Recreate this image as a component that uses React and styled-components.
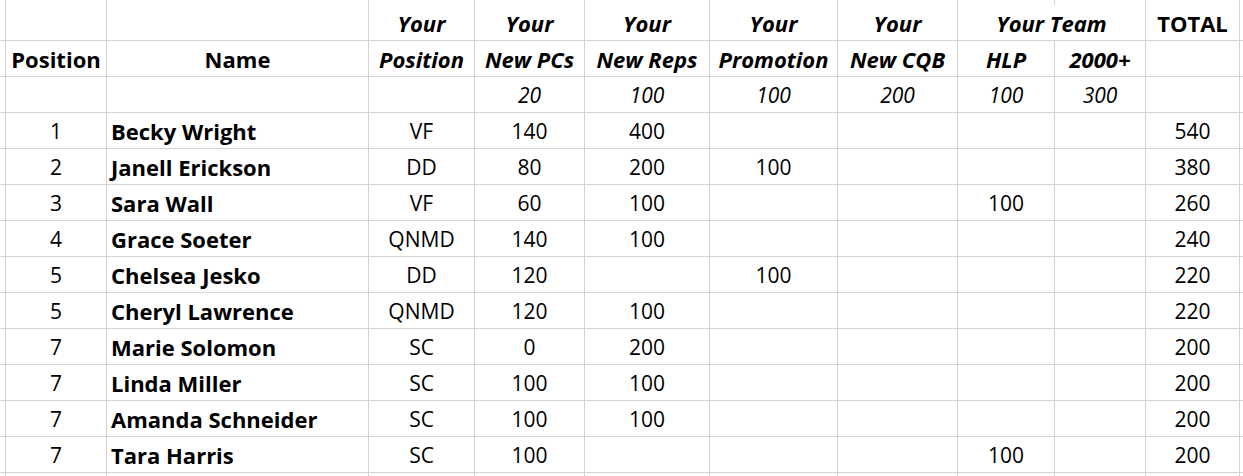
import React from "react";
import styled, { createGlobalStyle } from "styled-components";

const Global = createGlobalStyle`
  html, body { margin: 0; padding: 0; background: #ffffff; }
  body { font-family: "Open Sans", Lato, sans-serif; color: #000; overflow: hidden; }
`;

const Sheet = styled.div`
  display: grid;
  grid-template-columns: 5px 100px 261px 105px 109px 124px 127px 119px 96px 90px 93px 3px;
  grid-template-rows: 4px repeat(13, 35px) 3px;
  gap: 1px;
  background: #d4d4d4;
  width: 1243px;
  height: 476px;
  overflow: hidden;
`;

const Cell = styled.div`
  background: #ffffff;
  display: flex;
  align-items: flex-end;
  justify-content: ${(p) => (p.$align === "left" ? "flex-start" : "center")};
  padding: 0 ${(p) => (p.$align === "left" ? "4px" : "0")} 6.5px;
  font-family: "Open Sans", Lato, sans-serif;
  font-size: ${(p) => (p.$bold ? "22px" : "21px")};
  line-height: 1;
  font-weight: ${(p) => (p.$bold ? 700 : 400)};
  font-style: ${(p) => (p.$italic ? "italic" : "normal")};
  grid-column: ${(p) => (p.$span ? `span ${p.$span}` : "auto")};
  white-space: nowrap;
  overflow: hidden;
`;

const COLS = 12;

const header1 = [
  { t: "" }, { t: "" }, { t: "" },
  { t: "Your", b: true, i: true },
  { t: "Your", b: true, i: true },
  { t: "Your", b: true, i: true },
  { t: "Your", b: true, i: true },
  { t: "Your", b: true, i: true },
  { t: "Your Team", b: true, i: true, span: 2 },
  { t: "TOTAL", b: true },
  { t: "" },
];

const header2 = [
  { t: "" },
  { t: "Position", b: true },
  { t: "Name", b: true },
  { t: "Position", b: true, i: true },
  { t: "New PCs", b: true, i: true },
  { t: "New Reps", b: true, i: true },
  { t: "Promotion", b: true, i: true },
  { t: "New CQB", b: true, i: true },
  { t: "HLP", b: true, i: true },
  { t: "2000+", b: true, i: true },
  { t: "" },
  { t: "" },
];

const weights = ["", "", "", "", "20", "100", "100", "200", "100", "300", "", ""].map((t) => ({ t, i: true }));

const data = [
  [1, "Becky Wright", "VF", 140, 400, "", "", "", "", 540],
  [2, "Janell Erickson", "DD", 80, 200, 100, "", "", "", 380],
  [3, "Sara Wall", "VF", 60, 100, "", "", 100, "", 260],
  [4, "Grace Soeter", "QNMD", 140, 100, "", "", "", "", 240],
  [5, "Chelsea Jesko", "DD", 120, "", 100, "", "", "", 220],
  [5, "Cheryl Lawrence", "QNMD", 120, 100, "", "", "", "", 220],
  [7, "Marie Solomon", "SC", 0, 200, "", "", "", "", 200],
  [7, "Linda Miller", "SC", 100, 100, "", "", "", "", 200],
  [7, "Amanda Schneider", "SC", 100, 100, "", "", "", "", 200],
  [7, "Tara Harris", "SC", 100, "", "", "", 100, "", 200],
];

function Row({ cells, rowKey }) {
  return cells.map((c, idx) => (
    <Cell
      key={`${rowKey}-${idx}`}
      $bold={c.b}
      $italic={c.i}
      $align={c.a}
      $span={c.span}
    >
      {c.t}
    </Cell>
  ));
}

const blankRow = Array.from({ length: COLS }, () => ({ t: "" }));

export default function App() {
  return (
    <>
      <Global />
      <Sheet>
        <Row cells={blankRow} rowKey="top" />
        <Row cells={header1} rowKey="h1" />
        <Row cells={header2} rowKey="h2" />
        <Row cells={weights} rowKey="w" />
        {data.map((r, ri) => (
          <Row
            key={ri}
            rowKey={`d${ri}`}
            cells={[
              { t: "" },
              { t: String(r[0]) },
              { t: r[1], b: true, a: "left" },
              ...r.slice(2).map((v) => ({ t: String(v) })),
              { t: "" },
            ]}
          />
        ))}
        <Row cells={blankRow} rowKey="bottom" />
      </Sheet>
    </>
  );
}
